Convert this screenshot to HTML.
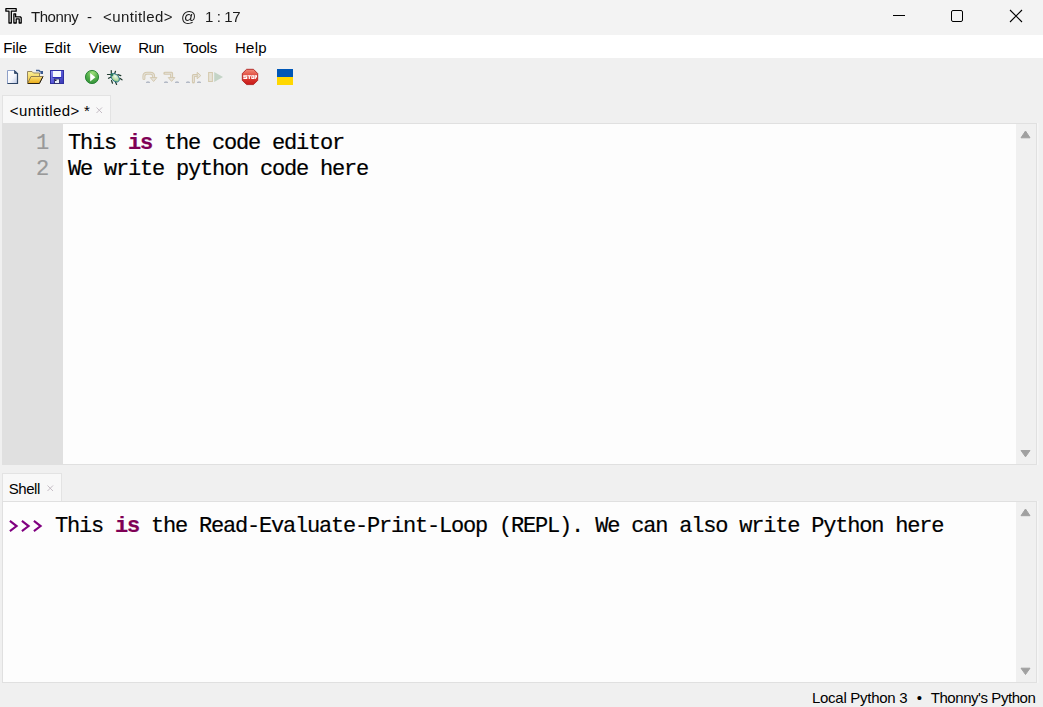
<!DOCTYPE html>
<html><head><meta charset="utf-8">
<style>
*{margin:0;padding:0;box-sizing:border-box}
html,body{width:1043px;height:707px;overflow:hidden;background:#f0f0f0;font-family:"Liberation Sans",sans-serif;position:relative}
.a{position:absolute}
#title{left:0;top:0;width:1043px;height:35px;background:#f3f3f3}
#menu{left:0;top:35px;width:1043px;height:23px;background:#ffffff}
.txt{white-space:pre;color:#000;font-size:15px;line-height:18px}
.mono{font-family:"Liberation Mono",monospace;font-size:22px;letter-spacing:-1.2px;-webkit-text-stroke:0.2px currentColor;white-space:pre;line-height:26px;color:#000}
.gray{will-change:transform}
.kw{color:#7f0055;font-weight:bold}
.tab{background:#f8f8f8;border:1px solid #e3e3e3;border-bottom:none}
.frame{border:1px solid #e0e0e0;background:#fdfdfd}
.gutter{background:#e0e0e0}
.sb{background:#f0f0f0}
svg{position:absolute;left:0;top:0}
</style></head>
<body>
<div id="title" class="a"></div>
<div id="menu" class="a"></div>

<!-- title text -->

<!-- menu -->

<!-- editor tab -->
<div class="a tab" style="left:2px;top:95px;width:109px;height:29px"></div>

<!-- editor frame -->
<div class="a frame" style="left:2px;top:123px;width:1035px;height:342px"></div>
<div class="a gutter" style="left:3px;top:124px;width:60px;height:340px"></div>
<div class="a sb" style="left:1016px;top:124px;width:20px;height:340px"></div>
<div class="a mono" style="left:36px;top:131px;color:#999">1
2</div>
<div class="a mono" style="left:68px;top:131px">This <span class="kw">is</span> the code editor
We write python code here</div>

<!-- shell tab -->
<div class="a tab" style="left:2px;top:473px;width:60px;height:29px"></div>

<!-- shell frame -->
<div class="a frame" style="left:2px;top:501px;width:1035px;height:182px"></div>
<div class="a sb" style="left:1016px;top:502px;width:20px;height:180px"></div>
<div class="a mono" style="left:7px;top:514px">    This <span class="kw">is</span> the Read-Evaluate-Print-Loop (REPL). We can also write Python here</div>

<!-- status -->

<div class="a txt gray" id="t_thonny" style="left:31.10px;top:8.00px;letter-spacing:-0.448px;font-size:15px;color:#1a1a1a">Thonny</div>
<div class="a txt gray" id="t_dash" style="left:87.00px;top:8.00px;letter-spacing:0.000px;font-size:15px;color:#1a1a1a">-</div>
<div class="a txt gray" id="t_unt" style="left:102.50px;top:8.00px;letter-spacing:0.409px;font-size:15px;color:#1a1a1a">&lt;untitled&gt;</div>
<div class="a txt gray" id="t_at" style="left:181.40px;top:8.00px;letter-spacing:0.000px;font-size:15px;color:#1a1a1a">@</div>
<div class="a txt gray" id="t_pos" style="left:204.70px;top:8.00px;letter-spacing:-0.384px;font-size:15px;color:#1a1a1a">1 : 17</div>
<div class="a txt" id="m_file" style="left:3.30px;top:39.00px;letter-spacing:-0.107px;font-size:15px;color:#000">File</div>
<div class="a txt" id="m_edit" style="left:44.40px;top:39.00px;letter-spacing:0.107px;font-size:15px;color:#000">Edit</div>
<div class="a txt" id="m_view" style="left:88.70px;top:39.00px;letter-spacing:0.000px;font-size:15px;color:#000">View</div>
<div class="a txt" id="m_run" style="left:138.30px;top:39.00px;letter-spacing:-0.720px;font-size:15px;color:#000">Run</div>
<div class="a txt" id="m_tools" style="left:183.00px;top:39.00px;letter-spacing:-0.200px;font-size:15px;color:#000">Tools</div>
<div class="a txt" id="m_help" style="left:235.00px;top:39.00px;letter-spacing:0.267px;font-size:15px;color:#000">Help</div>
<div class="a txt" id="tab_unt" style="left:9.75px;top:102.00px;letter-spacing:0.391px;font-size:15px;color:#000">&lt;untitled&gt;</div>
<div class="a txt" id="tab_star" style="left:83.90px;top:102.00px;letter-spacing:0.000px;font-size:15px;color:#000">*</div>
<div class="a txt" id="tab_shell" style="left:8.80px;top:480.00px;letter-spacing:-0.480px;font-size:15px;color:#000">Shell</div>
<div class="a txt" id="st_local" style="left:812.00px;top:689.00px;letter-spacing:-0.283px;font-size:15px;color:#000">Local Python 3</div>
<div class="a txt" id="st_bullet" style="left:916.70px;top:689.00px;letter-spacing:0.000px;font-size:15px;color:#000">•</div>
<div class="a txt" id="st_thonny" style="left:930.70px;top:689.00px;letter-spacing:-0.434px;font-size:15px;color:#000">Thonny&#x27;s Python</div>
<svg width="1043" height="707" viewBox="0 0 1043 707">
  <!-- logo -->
  <path d="M5.9,8.7H16.2V11.2H11.3V23H9V11.2H5.9Z" fill="#fff" stroke="#000" stroke-width="1.3" stroke-linejoin="round"/>
  <path d="M13.9,13.8H15.6V16.8H20.3L21.2,17.8V23H19.2V18.9H16.2V23H13.9Z" fill="#fff" stroke="#000" stroke-width="1.3" stroke-linejoin="round"/>
  <!-- window controls -->
  <rect x="893" y="15" width="12" height="1" fill="#000"/>
  <rect x="951.5" y="10.5" width="11" height="11" rx="1.5" fill="none" stroke="#000" stroke-width="1"/>
  <path d="M1010,10L1022,22M1022,10L1010,22" stroke="#000" stroke-width="1.1"/>

  <!-- scrollbar arrows -->
  <path d="M1021,137.8L1025.5,131L1030,137.8Z" fill="#a0a0a0" stroke="#a0a0a0" stroke-width="1" stroke-linejoin="round"/>
  <path d="M1021,450.5L1025.5,456.8L1030,450.5Z" fill="#a0a0a0" stroke="#a0a0a0" stroke-width="1" stroke-linejoin="round"/>
  <path d="M1021,515.7L1025.5,509L1030,515.7Z" fill="#a0a0a0" stroke="#a0a0a0" stroke-width="1" stroke-linejoin="round"/>
  <path d="M1021,668.2L1025.5,674.5L1030,668.2Z" fill="#a0a0a0" stroke="#a0a0a0" stroke-width="1" stroke-linejoin="round"/>

  <!-- prompt chevrons -->
  <path d="M9.9,520.9L16.6,526.1L9.9,531.1M21.9,520.9L28.6,526.1L21.9,531.1M33.9,520.9L40.6,526.1L33.9,531.1" fill="none" stroke="#800080" stroke-width="2.1" stroke-linejoin="miter"/>
  <!-- frame highlights -->
  <rect x="1037" y="123" width="1.5" height="342" fill="#f6f6f6"/>
  <rect x="1037" y="501" width="1.5" height="182" fill="#f6f6f6"/>
  <!-- tab close x -->
  <path d="M96.5,107.5L102,113M102,107.5L96.5,113" stroke="#beb6be" stroke-width="0.9"/>
  <path d="M47.5,485.5L53,491M53,485.5L47.5,491" stroke="#beb6be" stroke-width="0.9"/>
</svg>
<svg width="1043" height="707" viewBox="0 0 1043 707" style="position:absolute;left:0;top:0">
  <defs>
    <linearGradient id="gPage" x1="0" y1="0" x2="1" y2="1">
      <stop offset="0" stop-color="#ffffff"/><stop offset="0.55" stop-color="#f4f6fb"/><stop offset="1" stop-color="#b9c6e4"/>
    </linearGradient>
    <linearGradient id="gFold" x1="0" y1="0" x2="0" y2="1">
      <stop offset="0" stop-color="#fbf19a"/><stop offset="1" stop-color="#f0c030"/>
    </linearGradient>
    <linearGradient id="gFront" x1="0" y1="0" x2="0" y2="1">
      <stop offset="0" stop-color="#fbe27a"/><stop offset="1" stop-color="#e9a914"/>
    </linearGradient>
    <linearGradient id="gSave" x1="0" y1="0" x2="1" y2="1">
      <stop offset="0" stop-color="#9c9cf2"/><stop offset="0.5" stop-color="#5a5ad8"/><stop offset="1" stop-color="#3434b0"/>
    </linearGradient>
    <radialGradient id="gRun" cx="0.55" cy="0.2" r="0.9">
      <stop offset="0" stop-color="#9ee07a"/><stop offset="0.5" stop-color="#52ad4a"/><stop offset="1" stop-color="#2b8a34"/>
    </radialGradient>
    <linearGradient id="gStop" x1="0" y1="0" x2="0" y2="1">
      <stop offset="0" stop-color="#f08a78"/><stop offset="0.45" stop-color="#e0463a"/><stop offset="1" stop-color="#c81818"/>
    </linearGradient>
    <radialGradient id="gBug" cx="0.4" cy="0.35" r="0.7">
      <stop offset="0" stop-color="#f0faea"/><stop offset="0.6" stop-color="#b7dca6"/><stop offset="1" stop-color="#78b868"/>
    </radialGradient>
  </defs>

  <!-- new file -->
  <path d="M7.5,70.5H15L17.5,73V83.5H7.5Z" fill="url(#gPage)" stroke="#8ea0c8" stroke-width="1"/>
  <path d="M17.5,73V83.5H7.5" fill="none" stroke="#2d4566" stroke-width="1.2"/>
  <path d="M14.5,70.5V73.5H17.5Z" fill="#3a5070" stroke="#2d4566" stroke-width="0.8"/>

  <!-- open folder -->
  <path d="M27.5,83.5V71.5H32L33.5,73H39.5V76" fill="url(#gFold)" stroke="#958560" stroke-width="1"/>
  <path d="M27.5,83.5L31,76.5H43L39,83.5Z" fill="url(#gFront)" stroke="#8f7d50" stroke-width="1"/>
  <path d="M28,83.5H39.5L43,76.5" fill="none" stroke="#2a2010" stroke-width="1"/>
  <path d="M36,70.5H39L40.5,72" fill="none" stroke="#3a5a90" stroke-width="1.3"/>
  <rect x="40.5" y="71" width="2.5" height="3" fill="#3a5a90"/>

  <!-- save -->
  <rect x="50" y="70" width="14" height="14" fill="url(#gSave)"/>
  <rect x="50.5" y="70.5" width="13" height="13" fill="none" stroke="#3030a0" stroke-width="1"/>
  <rect x="53" y="71" width="8" height="6" fill="#f6f8fc"/>
  <rect x="52.5" y="77" width="9" height="1" fill="#2a2ab0"/>
  <rect x="54.5" y="79" width="5" height="4.5" fill="#e8eef8" stroke="#202060" stroke-width="0.8"/>
  <rect x="55" y="79.5" width="1.5" height="1.5" fill="#202040"/>

  <!-- run -->
  <circle cx="92" cy="77" r="6.6" fill="url(#gRun)" stroke="#1f7f2e" stroke-width="0.9"/>
  <path d="M90.2,73L95.4,77.2L90.2,81.4Z" fill="#ffffff"/>

  <!-- debug bug -->
  <g stroke="#1e3a2e" stroke-width="1.2" stroke-linecap="round" fill="none">
    <path d="M111.3,70.5V73.5"/>
    <path d="M115.5,71.3L114.5,74"/>
    <path d="M107.5,74.5H110.5"/>
    <path d="M117.8,74.6L120.8,75.6"/>
    <path d="M108.5,78.3L110.8,77.2"/>
    <path d="M119.8,78.3L122,79.8"/>
    <path d="M111.5,80.5L112.5,83.2"/>
    <path d="M115.6,82.2L116.6,84.4"/>
  </g>
  <ellipse cx="115.2" cy="77.8" rx="4.9" ry="3.3" transform="rotate(45 115.2 77.8)" fill="url(#gBug)" stroke="#1a6a86" stroke-width="0.9"/>
  <circle cx="111.9" cy="74.8" r="1.2" fill="#3a8a3a" stroke="#1a6a86" stroke-width="0.6"/>

  <!-- step over -->
  <g>
    <path d="M143.9,78.6V76.2Q143.9,73.2 147,73.2H150.6Q153.6,73.2 153.6,76.2V78" fill="none" stroke="#d3c8ae" stroke-width="3" stroke-linecap="round"/>
    <path d="M143.9,78.6V76.2Q143.9,73.2 147,73.2H150.6Q153.6,73.2 153.6,76.2V78" fill="none" stroke="#e5e2da" stroke-width="1.1" stroke-linecap="round"/>
    <path d="M150.3,77.6H156.9L153.6,81.5Z" fill="#e5e2da" stroke="#d3c8ae" stroke-width="1" stroke-linejoin="round"/>
    <path d="M146,83V82Q148,80.6 150,82V83Z" fill="#b4bac6"/>
  </g>
  <!-- step into -->
  <g>
    <path d="M164.8,73.3H171.6V78" fill="none" stroke="#d3c8ae" stroke-width="3" stroke-linecap="round" stroke-linejoin="round"/>
    <path d="M164.8,73.3H171.6V78" fill="none" stroke="#e5e2da" stroke-width="1.0"/>
    <path d="M168.3,77.6H174.8L171.6,81.4Z" fill="#e5e2da" stroke="#d3c8ae" stroke-width="1" stroke-linejoin="round"/>
    <path d="M164,83V82Q166,80.6 168,82V83Z" fill="#b4bac6"/>
    <path d="M175,83V82Q177,80.6 179,82V83Z" fill="#b4bac6"/>
  </g>
  <!-- step out -->
  <g>
    <path d="M193.4,82V75.6H197.5" fill="none" stroke="#d3c8ae" stroke-width="3" stroke-linecap="round" stroke-linejoin="round"/>
    <path d="M193.4,82V75.6H197.5" fill="none" stroke="#e5e2da" stroke-width="1.0"/>
    <path d="M197.2,72.3L200.8,75.6L197.2,78.8Z" fill="#e5e2da" stroke="#d3c8ae" stroke-width="1" stroke-linejoin="round"/>
    <path d="M186,83V82Q188,80.6 190,82V83Z" fill="#b4bac6"/>
    <path d="M197,83V82Q199,80.6 201,82V83Z" fill="#b4bac6"/>
  </g>
  <!-- resume -->
  <rect x="208.6" y="72.5" width="3.8" height="9" fill="#e6e3d8" stroke="#d4c9ae" stroke-width="1"/>
  <path d="M214.2,72L223,77L214.2,82Z" fill="#c4d4c6"/>

  <!-- stop -->
  <path d="M246.6,69.3H253.5L257.7,73.5V80.4L253.5,84.6H246.6L242.3,80.4V73.5Z" fill="url(#gStop)" stroke="#a81414" stroke-width="0.8"/>
  <g fill="#fff">
    <path d="M243.3,75.2H247.3V76.2H244.6V76.6H247.3V79H243.3V78H246V77.6H243.3Z"/>
    <path d="M247.6,75.2H251V76.3H249.9V79H248.7V76.3H247.6Z"/>
    <path d="M251.3,75.2H254.3V79H251.3Z M252.4,76.2V78H253.2V76.2Z" fill-rule="evenodd"/>
    <path d="M254.6,75.2H257V77.6H255.8V79H254.6Z M255.7,76.1V76.8H256V76.1Z" fill-rule="evenodd"/>
  </g>

  <!-- flag -->
  <rect x="277" y="69" width="16" height="8" fill="#0057b7"/>
  <rect x="277" y="77" width="16" height="8" fill="#ffd700"/>
</svg>

</body></html>
